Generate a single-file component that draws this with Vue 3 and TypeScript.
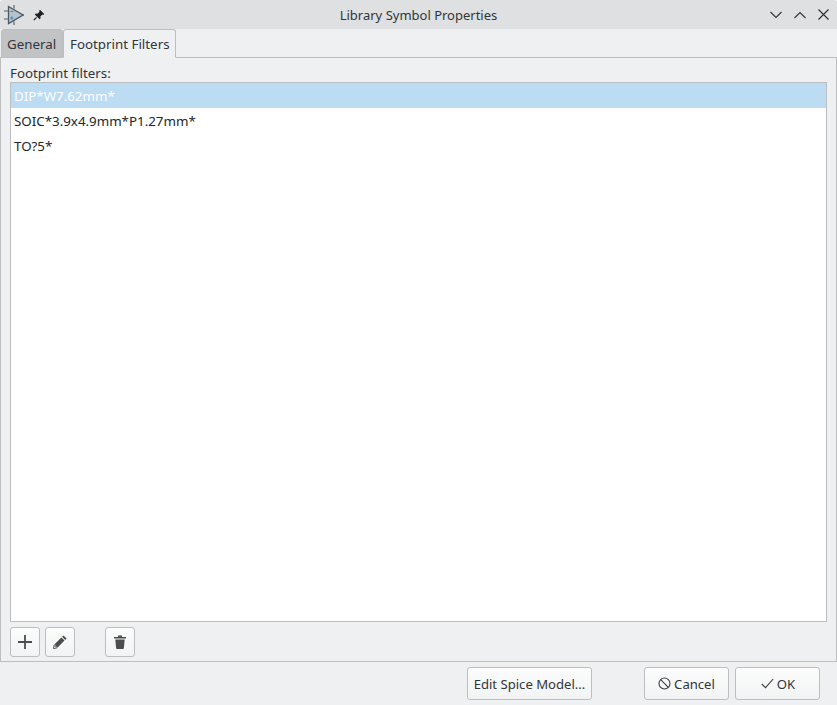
<script setup lang="ts">
const filters: string[] = ['DIP*W7.62mm*', 'SOIC*3.9x4.9mm*P1.27mm*', 'TO?5*']
</script>

<template>
  <div class="win">
    <header class="titlebar">
      <div class="tleft">
        <svg class="logo" width="20" height="20" viewBox="0 0 20 20">
          <path d="M0 6h5M0 14h5M18 10h2M10 0v3.500M10 16.500V20" stroke="#5a6167" stroke-width="1.200" fill="none" />
          <path d="M4.500 1.500L19 10 4.500 18.500z" fill="#b4c3cd" stroke="#4d5a64" stroke-width="1.300" />
          <path d="M6.300 6.500h3M6.300 13h3M7.800 11.500v3" stroke="#2a8bd0" stroke-width="1.200" fill="none" />
        </svg>
        <svg class="pin" width="12" height="12" viewBox="0 0 12 12">
          <path d="M7 .8L11.200 5 10.300 5.900 9.400 5.400 7.300 7.400 7.600 9.200 6.600 10.200 1.800 5.400 2.800 4.400 4.600 4.700 6.600 2.600 6.100 1.700z" fill="#1e1f20" />
          <path d="M3.600 8.400L.8 11.200" stroke="#1e1f20" stroke-width="1.200" />
        </svg>
      </div>
      <div class="title">Library Symbol Properties</div>
      <div class="controls">
        <svg width="12" height="8" viewBox="0 0 12 8"><path d="M.5 1l5.500 5.500L11.500 1" fill="none" stroke="#2e3336" stroke-width="1.100" /></svg>
        <svg width="12" height="8" viewBox="0 0 12 8"><path d="M.5 7L6 1.500 11.500 7" fill="none" stroke="#2e3336" stroke-width="1.100" /></svg>
        <svg width="11" height="11" viewBox="0 0 11 11"><path d="M.5.5l10 10M10.500.5l-10 10" fill="none" stroke="#2e3336" stroke-width="1.200" /></svg>
      </div>
    </header>

    <div class="tabs">
      <div class="tab inactive">General</div>
      <div class="tab active">Footprint Filters</div>
    </div>

    <section class="panel">
      <label class="lbl">Footprint filters:</label>
      <ul class="list">
        <li v-for="(f, i) in filters" :key="f" :class="{ sel: i === 0 }">{{ f }}</li>
      </ul>
      <div class="tools">
        <button class="tool" aria-label="Add">
          <svg width="14" height="14" viewBox="0 0 14 14"><path d="M7 0v14M0 7h14" stroke="#4d4d4f" stroke-width="1.800" /></svg>
        </button>
        <button class="tool" aria-label="Edit">
          <svg width="14" height="14" viewBox="0 0 14 14">
            <path d="M10.500 .4L13.600 3.500 12.200 4.900 9.100 1.800z" fill="#4d4d4f" />
            <path d="M8.400 2.500L11.500 5.600 4.400 12.700 1.300 9.600z" fill="#4d4d4f" />
            <path d="M.9 10.300L3.700 13.100.5 13.600z" fill="none" stroke="#4d4d4f" stroke-width=".9" />
          </svg>
        </button>
        <button class="tool gap" aria-label="Delete">
          <svg width="14" height="14" viewBox="0 0 14 14">
            <path d="M1 2h12v1.400H1zM5 .5h4V2H5z" fill="#4d4d4f" />
            <path d="M2.300 4.500h9.400l-.8 8.400q-.1 1-1 1H4.100q-.9 0-1-1z" fill="#4d4d4f" />
          </svg>
        </button>
      </div>
    </section>

    <footer class="footer">
      <button class="btn spice">Edit Spice Model...</button>
      <div class="pair">
        <button class="btn cancel">
          <svg width="13" height="13" viewBox="0 0 13 13"><circle cx="6.500" cy="6.500" r="5.500" fill="none" stroke="#3b3f42" stroke-width="1.100" /><path d="M2.700 2.700l7.600 7.600" stroke="#3b3f42" stroke-width="1.100" /></svg>
          Cancel
        </button>
        <button class="btn ok">
          <svg width="13" height="11" viewBox="0 0 13 11"><path d="M.8 6L4.500 9.700 12.200 1" fill="none" stroke="#3b3f42" stroke-width="1.100" /></svg>
          OK
        </button>
      </div>
    </footer>
  </div>
</template>

<style>
html, body { margin: 0; padding: 0; }
</style>

<style scoped>
.win {
  width: 837px;
  height: 705px;
  display: flex;
  flex-direction: column;
  background: #eff0f1;
  border-radius: 3px 3px 0 0;
  font-family: "Noto Sans", sans-serif;
  font-size: 13.330px;
  color: #31363b;
  overflow: hidden;
}
.titlebar {
  height: 29px;
  flex: none;
  background: #dee0e2;
  display: grid;
  grid-template-columns: 1fr auto 1fr;
  align-items: center;
  padding: 0 4px;
}
.tleft { display: flex; align-items: center; gap: 9px; height: 28px; }
.title { font-size: 13px; }
.controls { display: flex; justify-content: flex-end; align-items: center; gap: 12px; padding-right: 4px; }
.tabs {
  height: 28px;
  flex: none;
  display: flex;
  align-items: flex-start;
  padding-left: 1px;
  position: relative;
  z-index: 1;
}
.tab {
  box-sizing: border-box;
  height: 29px;
  padding: 0 0 0 6px;
  display: flex;
  align-items: center;
  border: 1px solid #bcbebf;
  border-radius: 3px 3px 0 0;
}
.tab.inactive { background: #c2c3c4; width: 62px; padding-left: 5px; }
.tab.active { background: #eff0f1; border-bottom-color: #eff0f1; width: 113px; }
.panel {
  box-sizing: border-box;
  height: 605px;
  flex: none;
  border: 1px solid #bcbebf;
  display: flex;
  flex-direction: column;
  padding: 6px 9px 4px;
}
.lbl { line-height: 18px; height: 18px; }
.list {
  list-style: none;
  margin: 0;
  padding: 0;
  flex: 1;
  background: #fff;
  border: 1px solid #bcbebf;
  min-height: 0;
}
.list li {
  box-sizing: border-box;
  height: 25px;
  line-height: 25px;
  padding: 1px 0 0 3px;
  color: #232629;
}
.list li.sel { background: #bcdcf4; color: #fcfcfc; }
.tools {
  display: flex;
  gap: 5px;
  margin-top: 5px;
}
.tool {
  box-sizing: border-box;
  width: 30px;
  height: 30px;
  padding: 0;
  border: 1px solid #bcbebf;
  border-radius: 3px;
  background: linear-gradient(#fcfcfc, #f2f3f4);
  display: flex;
  align-items: center;
  justify-content: center;
}
.tool.gap { margin-left: 25px; }
.footer {
  flex: 1;
  display: flex;
  justify-content: flex-end;
  align-items: flex-start;
  padding: 5px 17px 0 0;
  gap: 52px;
}
.pair { display: flex; gap: 6px; }
.btn {
  box-sizing: border-box;
  height: 33px;
  border: 1px solid #bcbebf;
  border-radius: 3px;
  background: linear-gradient(#fcfcfc, #f2f3f4);
  font-family: "Noto Sans", sans-serif;
  font-size: 13.100px;
  color: #31363b;
  display: flex;
  align-items: center;
  justify-content: center;
  gap: 3px;
  padding: 0;
}
.spice { width: 125px; }
.cancel { width: 85px; }
.ok { width: 85px; padding-left: 1px; }
</style>
